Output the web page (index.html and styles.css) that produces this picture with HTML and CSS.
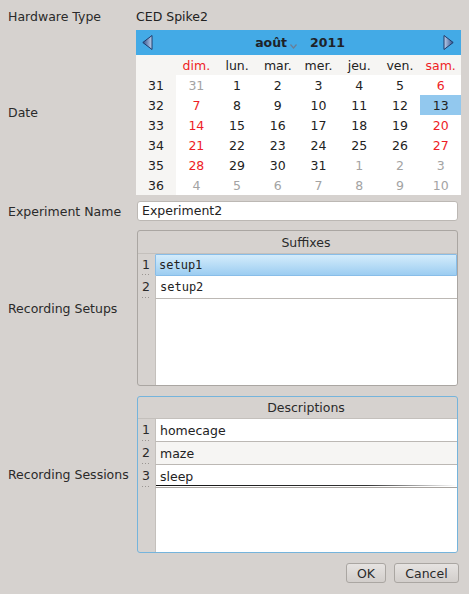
FILE: index.html
```html
<!DOCTYPE html>
<html>
<head>
<meta charset="utf-8">
<link rel="stylesheet" href="styles.css">
</head>
<body>
<div class="form">
  <div class="label row-hw">Hardware Type</div>
  <div class="value row-hw">CED Spike2</div>

  <div class="label gap-cal">Date</div>
  <div class="calendar gap-cal">
    <div class="cal-head">
      <svg class="arrow" width="11" height="15" viewBox="0 0 11 15">
        <defs><linearGradient id="gl" x1="0" y1="0" x2="1" y2="0"><stop offset="0" stop-color="#2f4f8c"/><stop offset="1" stop-color="#bdd0ec"/></linearGradient></defs>
        <polygon points="10,0.5 10,14.5 0.8,7.5" fill="url(#gl)" stroke="#1f3a6a" stroke-width="1"/>
      </svg>
      <div class="cal-title">
        <span class="month">août</span>
        <svg class="chev" width="7" height="5" viewBox="0 0 7 5"><polyline points="0.5,0.5 3.5,4 6.5,0.5" fill="none" stroke="#6a7e96" stroke-width="1.2"/></svg>
        <span class="year">2011</span>
      </div>
      <svg class="arrow" width="11" height="15" viewBox="0 0 11 15">
        <defs><linearGradient id="gr" x1="0" y1="0" x2="1" y2="0"><stop offset="0" stop-color="#bdd0ec"/><stop offset="1" stop-color="#2f4f8c"/></linearGradient></defs>
        <polygon points="1,0.5 1,14.5 10.2,7.5" fill="url(#gr)" stroke="#1f3a6a" stroke-width="1"/>
      </svg>
    </div>
    <div class="cal-grid">
      <div class="wk hd"></div>
      <div class="dn red">dim.</div><div class="dn">lun.</div><div class="dn">mar.</div><div class="dn">mer.</div><div class="dn">jeu.</div><div class="dn">ven.</div><div class="dn red">sam.</div>

      <div class="wk">31</div>
      <div class="d gray">31</div><div class="d">1</div><div class="d">2</div><div class="d">3</div><div class="d">4</div><div class="d">5</div><div class="d red">6</div>

      <div class="wk">32</div>
      <div class="d red">7</div><div class="d">8</div><div class="d">9</div><div class="d">10</div><div class="d">11</div><div class="d">12</div><div class="d sel">13</div>

      <div class="wk">33</div>
      <div class="d red">14</div><div class="d">15</div><div class="d">16</div><div class="d">17</div><div class="d">18</div><div class="d">19</div><div class="d red">20</div>

      <div class="wk">34</div>
      <div class="d red">21</div><div class="d">22</div><div class="d">23</div><div class="d">24</div><div class="d">25</div><div class="d">26</div><div class="d red">27</div>

      <div class="wk">35</div>
      <div class="d red">28</div><div class="d">29</div><div class="d">30</div><div class="d">31</div><div class="d gray">1</div><div class="d gray">2</div><div class="d gray">3</div>

      <div class="wk">36</div>
      <div class="d gray">4</div><div class="d gray">5</div><div class="d gray">6</div><div class="d gray">7</div><div class="d gray">8</div><div class="d gray">9</div><div class="d gray">10</div>
    </div>
  </div>

  <div class="label gap-name">Experiment Name</div>
  <div class="input gap-name">Experiment2</div>

  <div class="label gap-setups">Recording Setups</div>
  <div class="table setups gap-setups">
    <div class="corner"></div>
    <div class="th">Suffixes</div>
    <div class="vh"><span>1</span><i class="dots"></i></div>
    <div class="td mono selrow">setup1</div>
    <div class="vh"><span>2</span><i class="dots"></i></div>
    <div class="td mono">setup2</div>
    <div class="vh-fill"></div>
    <div class="td-fill"></div>
  </div>

  <div class="label gap-sessions">Recording Sessions</div>
  <div class="table sessions gap-sessions">
    <div class="corner"></div>
    <div class="th">Descriptions</div>
    <div class="vh"><span>1</span><i class="dots"></i></div>
    <div class="td">homecage</div>
    <div class="vh"><span>2</span><i class="dots"></i></div>
    <div class="td alt">maze</div>
    <div class="vh"><span>3</span><i class="dots"></i></div>
    <div class="td editing">sleep</div>
    <div class="vh-fill"></div>
    <div class="td-fill"></div>
  </div>

  <div class="buttons">
    <div class="btn ok">OK</div>
    <div class="btn cancel">Cancel</div>
  </div>
</div>
</body>
</html>
```

FILE: styles.css
```css
html, body {
  margin: 0;
  padding: 0;
  background: #d6d2cf;
}
body {
  font-family: "DejaVu Sans", sans-serif;
  font-size: 12.5px;
  color: #222;
  width: 469px;
  height: 594px;
  overflow: hidden;
}
.form {
  display: grid;
  grid-template-columns: 128px 325px;
  padding: 8px 8px 0 8px;
  align-items: center;
}
.label {
  white-space: nowrap;
  color: #2a2a2a;
}
.gap-cal { margin-top: 4px; }
.gap-name { margin-top: 6px; }
.gap-setups { margin-top: 9px; }
.gap-sessions { margin-top: 10px; }
.row-hw {
  height: 18px;
  line-height: 18px;
}
.value { color: #222; }

/* Calendar */
.calendar {
  height: 165px;
  background: #fff;
}
.cal-head {
  height: 25px;
  background: #43aae6;
  display: flex;
  align-items: center;
  justify-content: space-between;
  padding: 0 7px 0 6px;
}
.arrow { display: block; }
.cal-title {
  display: flex;
  align-items: center;
  font-weight: bold;
  color: #1e2228;
  padding-left: 4px;
}
.chev {
  margin: 8px 13px 0 3px;
}
.cal-grid {
  display: grid;
  grid-template-columns: 40px repeat(7, 1fr);
  grid-auto-rows: 20px;
}
.wk, .dn {
  background: #f6f5f3;
}
.wk, .dn, .d {
  display: flex;
  align-items: center;
  justify-content: center;
}
.d { background: #fff; }
.red { color: #ee1d26; }
.gray { color: #a3a3a3; }
.sel { background: #92c8ee; color: #222; }

/* Input */
.input {
  margin-right: 3px;
  margin-left: 1px;
  height: 20px;
  box-sizing: border-box;
  background: #fff;
  border: 1px solid #bcb8b4;
  border-radius: 3px;
  padding-left: 4px;
  line-height: 18px;
}

/* Tables */
.table {
  box-sizing: border-box;
  margin-right: 3px;
  margin-left: 1px;
  border: 1px solid #aaa6a2;
  border-radius: 3px;
  background: #d6d2cf;
  display: grid;
  grid-template-columns: 17px 1fr;
  overflow: hidden;
}
.setups {
  height: 156px;
  grid-template-rows: 23px 22px 23px 1fr;
}
.sessions {
  height: 157px;
  border-color: #75b4dc;
  grid-template-rows: 22px 23px 23px 23px 1fr;
}
.corner {
  border-bottom: 1px solid #c4c0bc;
}
.th {
  display: flex;
  align-items: center;
  justify-content: center;
  border-bottom: 1px solid #c4c0bc;
  color: #2a2a2a;
}
.vh {
  display: flex;
  flex-direction: column;
  padding-left: 4px;
  padding-top: 3px;
  box-sizing: border-box;
  color: #2a2a2a;
}
.vh span { line-height: 15px; }
.dots {
  display: block;
  margin-top: auto;
  margin-bottom: 1px;
  width: 7px;
  height: 1px;
  background: repeating-linear-gradient(90deg, #9a9692 0 1px, transparent 1px 3px);
}
.td {
  background: #fff;
  border-left: 1px solid #c4c0bc;
  border-bottom: 1px solid #bcb8b4;
  display: flex;
  align-items: center;
  padding-left: 4px;
}
.mono {
  font-family: "DejaVu Sans Mono", monospace;
  font-size: 12px;
}
.selrow {
  background: linear-gradient(#d4ecfb, #9ccdf1);
  border: 1px solid #88bde8;
  border-radius: 1px;
  padding-left: 3px;
}
.alt { background: #f6f5f3; }
.editing {
  border-bottom-color: #a8a4a0;
  background:
    linear-gradient(90deg, #111 0%, #333 70%, rgba(255,255,255,0) 100%) left bottom 1px / 100% 1px no-repeat,
    #fff;
}
.td-fill {
  background: #fff;
  border-left: 1px solid #c4c0bc;
}

/* Buttons */
.buttons {
  grid-column: 1 / 3;
  display: flex;
  justify-content: flex-end;
  gap: 8px;
  margin-top: 10px;
  padding-right: 2px;
}
.btn {
  height: 20px;
  box-sizing: border-box;
  border: 1px solid #aaa6a2;
  border-radius: 3px;
  background: linear-gradient(#e6e3e1, #d2cecb);
  display: flex;
  align-items: center;
  justify-content: center;
  color: #2a2a2a;
}
.ok { width: 40px; }
.cancel { width: 65px; }
```
